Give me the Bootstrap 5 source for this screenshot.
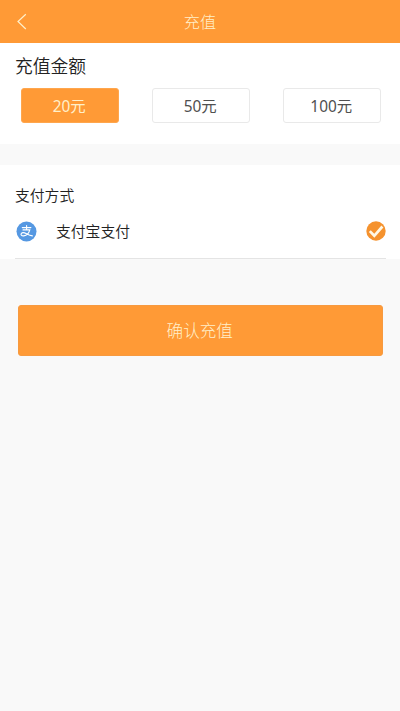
<!DOCTYPE html>
<html lang="zh-CN">
<head>
<meta charset="utf-8">
<meta name="viewport" content="width=device-width, initial-scale=1">
<title>充值</title>
<link href="https://cdn.jsdelivr.net/npm/bootstrap@5.3.0/dist/css/bootstrap.min.css" rel="stylesheet">
<style>
  :root { --brand: #ff9a36; }
  body { background: #f9f9f9; color: #222; font-family: "Noto Sans CJK SC", sans-serif; font-size: 14.8px; font-weight: 350; line-height: 20px; min-height: 711px; }
  .topbar { height: 43px; background: var(--brand); color: #ffefc9; padding: 0 15px; }
  .topbar h1 { font-size: 16.2px; font-weight: 300; line-height: 24px; position: relative; top: -1px; }
  .side { width: 16px; height: 18px; }
  .amount-panel { height: 101px; padding: 9px 19px 0 20.5px; }
  .amount-panel h2 { font-size: 17.8px; font-weight: 350; line-height: 26px; margin: 0 0 10px -5.5px; }
  .amounts { gap: 32.5px; }
  .amounts .btn { --bs-btn-padding-y: 0; --bs-btn-padding-x: 0; height: 34.5px; flex: 1 1 0; border: 1px solid #e9e9e9; border-radius: 3px; color: #505050; font-family: "Noto Sans", "Noto Sans CJK SC", sans-serif; font-size: 15.4px; font-weight: 400; line-height: 34px; }
  .amounts .btn span { position: relative; top: 1px; left: -0.5px; }
  .amounts .btn.active { background: var(--brand); border-color: #ffa64d; color: #ffefc9; }
  .pay-panel { height: 94px; margin-top: 21px; padding: 19px 14px 0 15px; }
  .pay-panel h2 { font-size: 14.8px; font-weight: 350; line-height: 22px; margin: 0; }
  .pay-row { height: 53px; border-bottom: 1px solid #e4e4e4; padding: 0 0 2px 1px; }
  .pay-row span { margin-left: 19px; }
  .confirm { height: 51px; margin: 46px 17px 0 17.5px; background: var(--brand); border: 1px solid #f79a40; border-radius: 3px; color: #ffefc9; font-size: 16.6px; font-weight: 300; }
  .confirm span { position: relative; left: -0.5px; }
</style>
</head>
<body>
<header class="topbar d-flex align-items-center justify-content-between">
  <svg class="side" viewBox="0 0 16 18" fill="none" stroke="#ffefc9" stroke-width="1.2"><path d="M10.8 1.2 3 8.500 10.800 16"/></svg>
  <h1 class="m-0">充值</h1>
  <div class="side"></div>
</header>
<main class="d-flex flex-column">
  <section class="amount-panel bg-white">
    <h2>充值金额</h2>
    <div class="amounts d-flex">
      <button type="button" class="btn active"><span>20元</span></button>
      <button type="button" class="btn"><span>50元</span></button>
      <button type="button" class="btn"><span>100元</span></button>
    </div>
  </section>
  <section class="pay-panel bg-white">
    <h2>支付方式</h2>
    <div class="pay-row d-flex align-items-center">
      <svg width="21" height="21" viewBox="0 0 21 21" fill="none" stroke="#fff" stroke-linecap="round"><circle cx="10.5" cy="10.5" r="10" fill="#5598e2" stroke="none"/><path stroke-width="1.1" d="M6.300 6.600h8.600M10.600 4.600v4.200M7 8.900h6.800c-.8 2.800-3.200 5.700-6 6-2.400.2-3.300-1.200-2.500-2.400 1-1.300 3.300-.8 5.200.2 1.900 1 3.700 1.900 5.900 2.200"/></svg>
      <span>支付宝支付</span>
      <svg class="ms-auto" width="20" height="20" viewBox="0 0 20 20" fill="none"><circle cx="10" cy="10" r="9.700" fill="#f5922e"/><path d="m3.800 10.100 4.500 4.700 8.100-9.300" stroke="#fff8e6" stroke-width="2.700"/></svg>
    </div>
  </section>
  <button type="button" class="confirm btn p-0"><span>确认充值</span></button>
</main>
<script src="https://cdn.jsdelivr.net/npm/bootstrap@5.3.0/dist/js/bootstrap.bundle.min.js"></script>
</body>
</html>
